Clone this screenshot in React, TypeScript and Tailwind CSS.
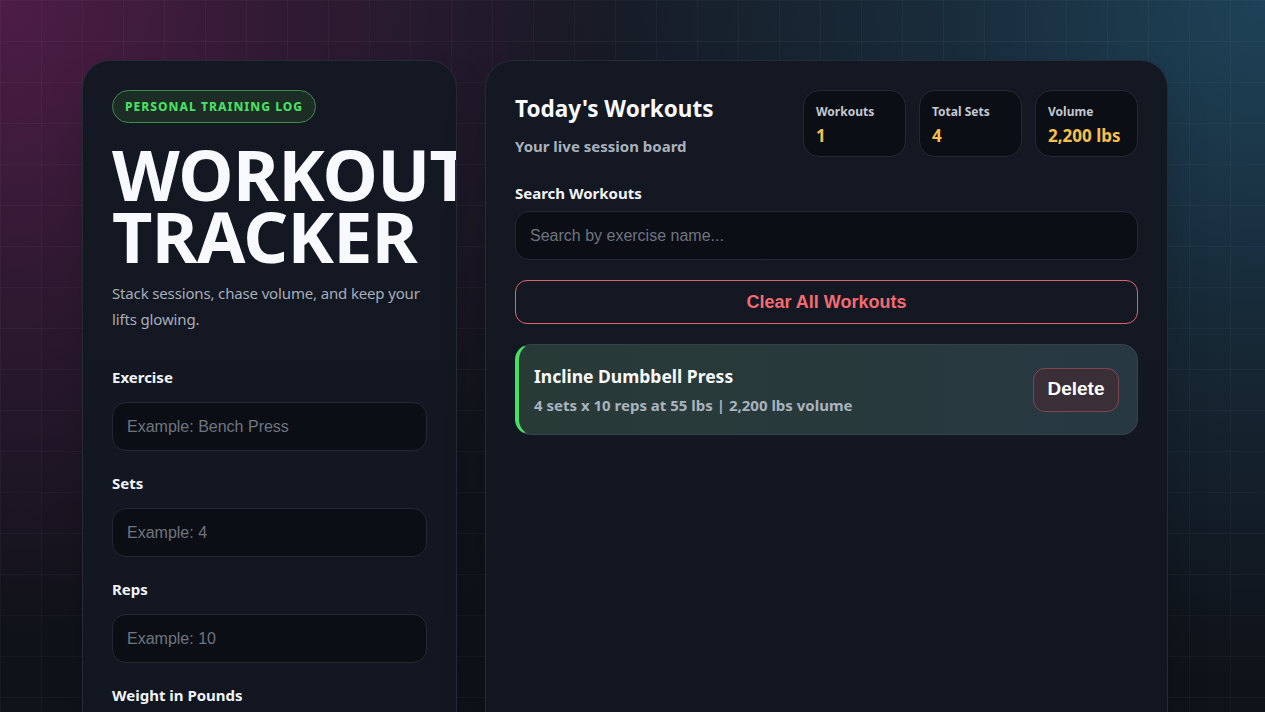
import React, { useState } from "react";

type Workout = {
    id: number;
    name: string;
    sets: number;
    reps: number;
    weight: number;
};

const sans = "font-['Noto_Sans','Open_Sans',sans-serif]";
const arial = "font-['Liberation_Sans',Arial,sans-serif]";

function Field({ label, placeholder }: { label: string; placeholder: string }) {
    return (
        <div className="flex flex-col gap-[15px]">
            <label className="text-[15px] font-bold text-[#f1f3f7] leading-5">{label}</label>
            <input
                type="text"
                placeholder={placeholder}
                className={`${arial} h-[49px] w-full rounded-[14px] border border-[#232835] bg-[#0b0e15] px-[14px] text-base text-white placeholder:text-[#6f7580] outline-none`}
            />
        </div>
    );
}

function Stat({ label, value }: { label: string; value: string }) {
    return (
        <div className="flex h-[67px] w-[103px] flex-col justify-center gap-[4px] rounded-[16px] border border-[#232835] bg-[#0b0e14] px-[12px] pt-[4px]">
            <span className="text-[12px] font-bold leading-4 text-[#c3c8d1]">{label}</span>
            <span className="text-[17px] font-bold leading-6 text-[#f7c04e]">{value}</span>
        </div>
    );
}

export default function App() {
    const [workouts, setWorkouts] = useState<Workout[]>([
        { id: 1, name: "Incline Dumbbell Press", sets: 4, reps: 10, weight: 55 },
    ]);
    const [query, setQuery] = useState("");

    const totalSets = workouts.reduce((s, w) => s + w.sets, 0);
    const volume = workouts.reduce((s, w) => s + w.sets * w.reps * w.weight, 0);
    const shown = workouts.filter((w) => w.name.toLowerCase().includes(query.toLowerCase()));

    return (
        <div
            className={`${sans} min-h-screen bg-[#0e111a] pr-[15px]`}
            style={{
                backgroundImage:
                    "linear-gradient(rgba(255,255,255,0.03) 1px, transparent 1px), linear-gradient(90deg, rgba(255,255,255,0.03) 1px, transparent 1px), radial-gradient(ellipse 50% 90% at 0% 0%, rgba(78,28,70,1), rgba(70,26,64,0.55) 45%, transparent 100%), radial-gradient(ellipse 55% 95% at 100% 0%, rgba(30,66,88,1), rgba(28,62,82,0.5) 45%, transparent 100%), linear-gradient(180deg, #161a24 0%, #0f1219 65%, #10151a 100%)",
                backgroundSize: "41px 41px, 41px 41px, 100% 712px, 100% 712px, 100% 100%",
                backgroundRepeat: "repeat, repeat, no-repeat, no-repeat, no-repeat",
            }}
        >
            <div className="mx-auto grid w-[1086px] grid-cols-[375px_1fr] gap-[28px] pt-[60px] pb-16">
                {/* Form card */}
                <section className="overflow-hidden rounded-[28px] border border-[#252a36] bg-gradient-to-b from-[#141822] to-[#121621] p-[29px] shadow-2xl">
                    <span className="inline-flex h-[33px] items-center rounded-full border border-[#3f8a4f] bg-[#1b2d24] px-[12px] text-[12px] font-extrabold tracking-[0.085em] text-[#4ade64]">
                        PERSONAL TRAINING LOG
                    </span>
                    <h1 className="mt-[20px] whitespace-nowrap text-[70px] font-bold leading-[62px] tracking-[-0.01em] text-[#f8f9fc]">
                        WORKOUT
                        <br />
                        TRACKER
                    </h1>
                    <p className="mt-[13px] text-[15px] leading-[26px] tracking-[-0.01em] text-[#a7adb9]">
                        Stack sessions, chase volume, and keep your lifts glowing.
                    </p>

                    <form className="mt-[35px] flex flex-col gap-[22px]" onSubmit={(e) => e.preventDefault()}>
                        <Field label="Exercise" placeholder="Example: Bench Press" />
                        <Field label="Sets" placeholder="Example: 4" />
                        <Field label="Reps" placeholder="Example: 10" />
                        <Field label="Weight in Pounds" placeholder="Example: 135" />
                        <button
                            className={`${arial} mt-[6px] h-[48px] rounded-[12px] bg-[#4ade64] text-[18px] font-bold text-[#0b1410]`}
                        >
                            Add Workout
                        </button>
                    </form>
                </section>

                {/* Board card */}
                <section className="rounded-[28px] border border-[#252a36] bg-gradient-to-b from-[#141822] to-[#121621] p-[29px] shadow-2xl">
                    <div className="flex items-start justify-between">
                        <div className="pt-[3px]">
                            <h2 className="text-[22.5px] font-bold leading-8 text-[#f8f9fc]">Today's Workouts</h2>
                            <p className="mt-[11px] text-[15px] font-bold leading-5 text-[#a9b1bd]">Your live session board</p>
                        </div>
                        <div className="flex gap-[13px]">
                            <Stat label="Workouts" value={String(workouts.length)} />
                            <Stat label="Total Sets" value={String(totalSets)} />
                            <Stat label="Volume" value={`${volume.toLocaleString("en-US")} lbs`} />
                        </div>
                    </div>

                    <div className="mt-[26px] flex flex-col gap-[8px]">
                        <label className="text-[15px] font-bold leading-5 text-[#f1f3f7]">Search Workouts</label>
                        <input
                            type="text"
                            value={query}
                            onChange={(e) => setQuery(e.target.value)}
                            placeholder="Search by exercise name..."
                            className={`${arial} h-[49px] w-full rounded-[14px] border border-[#232835] bg-[#0b0e15] px-[14px] text-base text-white placeholder:text-[#6f7580] outline-none`}
                        />
                    </div>

                    <button
                        onClick={() => setWorkouts([])}
                        className={`${arial} mt-[20px] h-[44px] w-full rounded-[12px] border border-[#e06470] bg-transparent text-[18px] font-bold text-[#f26b72]`}
                    >
                        Clear All Workouts
                    </button>

                    <div className="mt-[20px] flex flex-col gap-[14px]">
                        {shown.map((w) => (
                            <div
                                key={w.id}
                                className="flex h-[91px] items-center justify-between rounded-[16px] border border-[#34424a] border-l-4 border-l-[#4ade64] bg-gradient-to-r from-[#283a36] to-[#283842] pl-[15px] pr-[18px]"
                            >
                                <div>
                                    <h3 className="text-[17.5px] font-bold leading-6 text-[#f8f9fc]">{w.name}</h3>
                                    <p className="mt-[7px] text-[15px] font-bold leading-5 text-[#a9b3bf]">
                                        {w.sets} sets x {w.reps} reps at {w.weight} lbs | {(w.sets * w.reps * w.weight).toLocaleString("en-US")} lbs volume
                                    </p>
                                </div>
                                <button
                                    onClick={() => setWorkouts(workouts.filter((x) => x.id !== w.id))}
                                    className={`${arial} h-[44px] w-[86px] rounded-[12px] border border-[#7c4751] bg-[#3b2f37] text-[19px] font-bold text-white`}
                                >
                                    Delete
                                </button>
                            </div>
                        ))}
                    </div>
                </section>
            </div>
        </div>
    );
}
